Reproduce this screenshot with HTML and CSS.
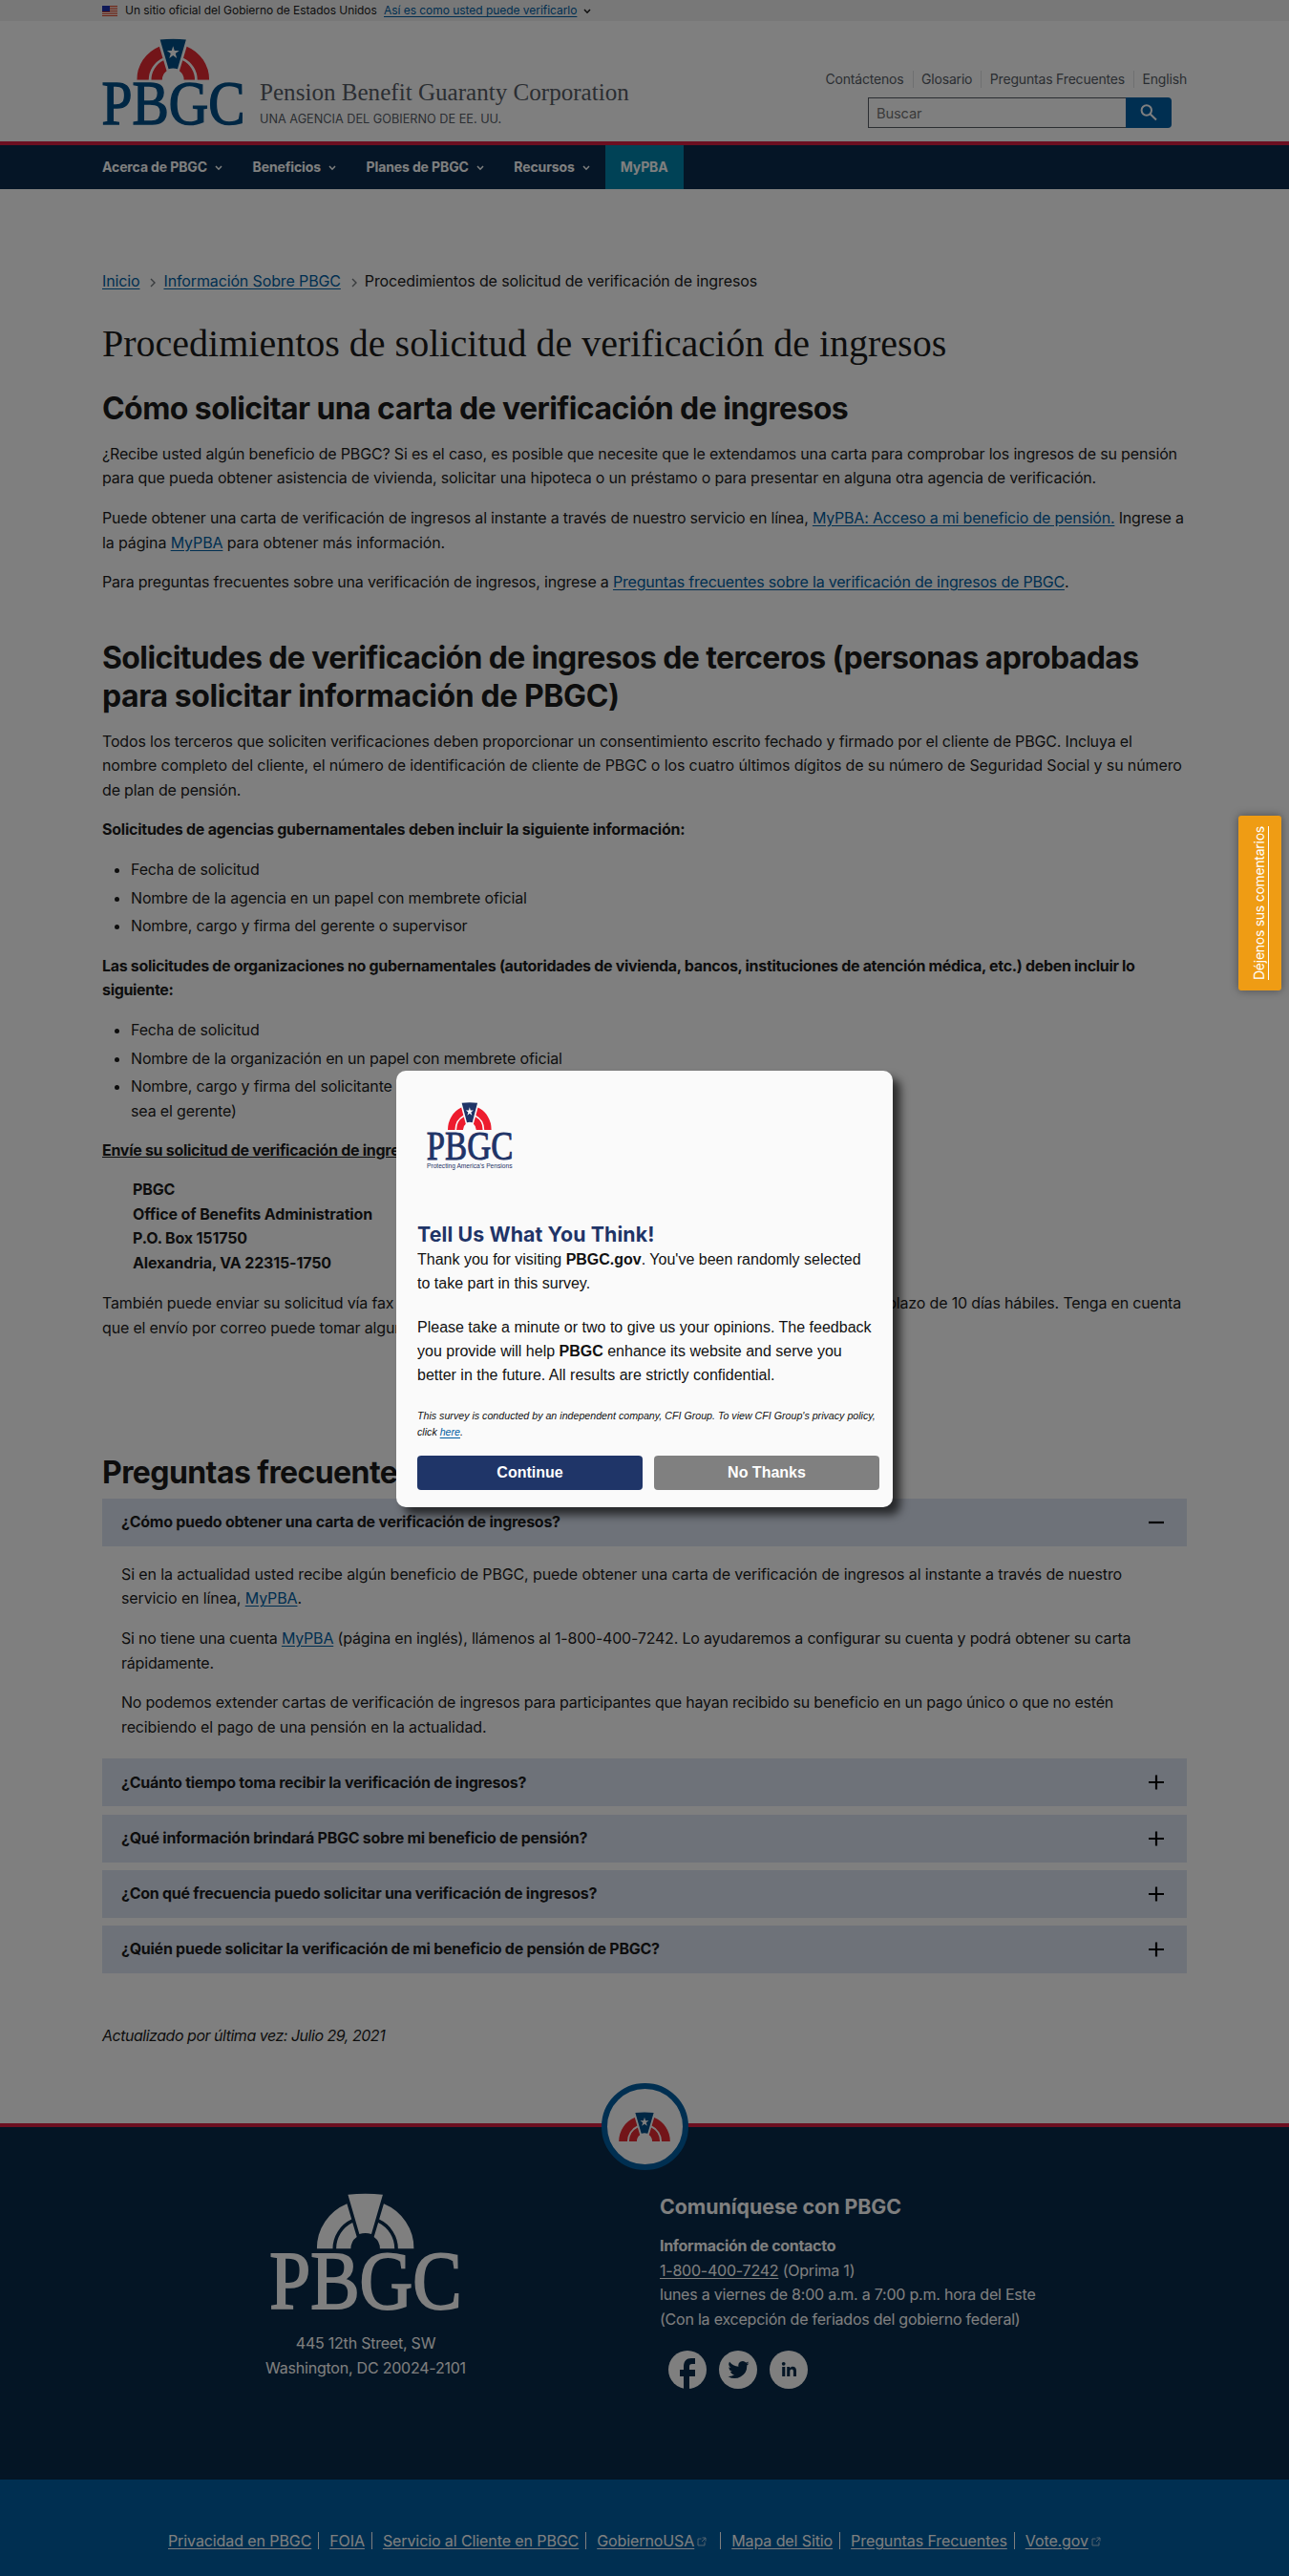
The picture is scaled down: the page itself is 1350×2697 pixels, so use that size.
FILE: index.html
```html
<!DOCTYPE html>
<html lang="es">
<head>
<meta charset="utf-8">
<title>Procedimientos de solicitud de verificación de ingresos</title>
<link rel="stylesheet" href="styles.css">
</head>
<body>
<svg class="defs" aria-hidden="true">
  <symbol id="arch" viewBox="-154 -176 308 176">
    <g class="ring">
      <path d="M-153 0A153 153 0 0 1-58-142L-43.500-93A103 103 0 0 0-103 0Z"/>
      <path d="M-92 0A92 92 0 0 1-40.500-83L-27-38A46 46 0 0 0-46 0Z"/>
      <path d="M153 0A153 153 0 0 0 58-142L43.500-93A103 103 0 0 1 103 0Z"/>
      <path d="M92 0A92 92 0 0 0 40.500-83L27-38A46 46 0 0 1 46 0Z"/>
    </g>
    <path class="key" d="M-55-171Q0-177 55-171L19-47Q0-53-19-47Z"/>
    <path class="star" d="M0-144L6-124H26L10-112L16-92L0-104L-16-92L-10-112L-26-124H-6Z"/>
  </symbol>
  <symbol id="chev" viewBox="0 0 8 6"><path d="M1 1L4 4.200L7 1" fill="none" stroke="currentColor" stroke-width="1.500"/></symbol>
  <symbol id="ext" viewBox="0 0 10 10"><path d="M4.500 2H1V9H8V5.500M5.500 1H9V4.500M9 1L5 5" fill="none" stroke="currentColor" stroke-width="1"/></symbol>
</svg>

<div class="banner"><div class="wrap banner-row">
  <svg class="flag" viewBox="0 0 16 11"><path fill="#fff" d="M0 0H16V11H0Z"/><path fill="#db3e1f" d="M0 0H16V1H0ZM0 2H16V3H0ZM0 4H16V5H0ZM0 6H16V7H0ZM0 8H16V9H0ZM0 10H16V11H0Z"/><path fill="#1e33b1" d="M0 0H8V6H0Z"/></svg>
  <span class="banner-text">Un sitio oficial del Gobierno de Estados Unidos</span>
  <a href="#" class="banner-link">Así es como usted puede verificarlo</a>
  <svg class="chev"><use href="#chev"/></svg>
</div></div>

<header class="header"><div class="wrap header-row">
  <svg class="logo logo-header" viewBox="-300 -176 602 370"><use href="#arch" x="-154" y="-176" width="308" height="176"/><text class="letters" x="-302" y="188" textLength="606" lengthAdjust="spacingAndGlyphs">PBGC</text></svg>
  <div class="brand">
    <div class="brand-name">Pension Benefit Guaranty Corporation</div>
    <div class="brand-sub">UNA AGENCIA DEL GOBIERNO DE EE. UU.</div>
  </div>
  <div class="header-tools">
    <ul class="top-links"><li>Contáctenos</li><li>Glosario</li><li>Preguntas Frecuentes</li><li>English</li></ul>
    <div class="search">
      <div class="search-input">Buscar</div>
      <div class="search-button"><svg viewBox="0 0 20 20" width="20" height="20"><circle cx="7.800" cy="7.500" r="5.200"/><path d="M11.800 11.500L18 17.500"/></svg></div>
    </div>
  </div>
</div></header>

<nav class="nav"><div class="wrap nav-row">
  <span class="nav-item">Acerca de PBGC<svg class="chev"><use href="#chev"/></svg></span>
  <span class="nav-item">Beneficios<svg class="chev"><use href="#chev"/></svg></span>
  <span class="nav-item">Planes de PBGC<svg class="chev"><use href="#chev"/></svg></span>
  <span class="nav-item">Recursos<svg class="chev"><use href="#chev"/></svg></span>
  <span class="nav-item nav-active">MyPBA</span>
</div></nav>

<main class="wrap main">
  <div class="crumbs"><a href="#">Inicio</a><svg class="crumb-sep" viewBox="0 0 6 10"><path d="M1 1L5 5L1 9"/></svg><a href="#">Información Sobre PBGC</a><svg class="crumb-sep" viewBox="0 0 6 10"><path d="M1 1L5 5L1 9"/></svg><span>Procedimientos de solicitud de verificación de ingresos</span></div>
  <h1>Procedimientos de solicitud de verificación de ingresos</h1>
  <h2 class="first">Cómo solicitar una carta de verificación de ingresos</h2>
  <p>¿Recibe usted algún beneficio de PBGC? Si es el caso, es posible que necesite que le extendamos una carta para comprobar los ingresos de su pensión<br>para que pueda obtener asistencia de vivienda, solicitar una hipoteca o un préstamo o para presentar en alguna otra agencia de verificación.</p>
  <p class="tight">Puede obtener una carta de verificación de ingresos al instante a través de nuestro servicio en línea, <a href="#">MyPBA: Acceso a mi beneficio de pensión.</a> Ingrese a<br><span class="loose">la página <a href="#">MyPBA</a> para obtener más información.</span></p>
  <p class="tight">Para preguntas frecuentes sobre una verificación de ingresos, ingrese a <a href="#">Preguntas frecuentes sobre la verificación de ingresos de PBGC</a>.</p>
  <h2 class="second">Solicitudes de verificación de ingresos de terceros (personas aprobadas<br><span class="wider">para solicitar información de PBGC)</span></h2>
  <p class="snug">Todos los terceros que soliciten verificaciones deben proporcionar un consentimiento escrito fechado y firmado por el cliente de PBGC. Incluya el<br><span class="loose">nombre completo del cliente, el número de identificación de cliente de PBGC o los cuatro últimos dígitos de su número de Seguridad Social y su número</span><br>de plan de pensión.</p>
  <p><b class="request">Solicitudes de agencias gubernamentales deben incluir la siguiente información:</b></p>
  <ul class="list">
    <li>Fecha de solicitud</li>
    <li>Nombre de la agencia en un papel con membrete oficial</li>
    <li>Nombre, cargo y firma del gerente o supervisor</li>
  </ul>
  <p><b class="org">Las solicitudes de organizaciones no gubernamentales (autoridades de vivienda, bancos, instituciones de atención médica, etc.) deben incluir lo<br>siguiente:</b></p>
  <ul class="list">
    <li>Fecha de solicitud</li>
    <li>Nombre de la organización en un papel con membrete oficial</li>
    <li>Nombre, cargo y firma del solicitante<br>sea el gerente)</li>
  </ul>
  <p><b><u>Envíe su solicitud de verificación de ingresos a:</u></b></p>
  <p class="address"><b>PBGC<br>Office of Benefits Administration<br>P.O. Box 151750<br>Alexandria, VA 22315-1750</b></p>
  <p class="fax"><span>También puede enviar su solicitud vía fax</span><span>plazo de 10 días hábiles. Tenga en cuenta</span></p>
  <p class="fax-end">que el envío por correo puede tomar algunos días.</p>
  <h2 class="faq">Preguntas frecuentes</h2>
  <div class="accordion">
    <div class="acc-head">¿Cómo puedo obtener una carta de verificación de ingresos?<svg class="sign" viewBox="0 0 16 16"><path d="M0 8H16"/></svg></div>
    <div class="acc-body">
      <p class="loose">Si en la actualidad usted recibe algún beneficio de PBGC, puede obtener una carta de verificación de ingresos al instante a través de nuestro<br>servicio en línea, <a href="#">MyPBA</a>.</p>
      <p class="tight">Si no tiene una cuenta <a href="#">MyPBA</a> (página en inglés), llámenos al 1-800-400-7242. Lo ayudaremos a configurar su cuenta y podrá obtener su carta<br>rápidamente.</p>
      <p class="tighter">No podemos extender cartas de verificación de ingresos para participantes que hayan recibido su beneficio en un pago único o que no estén<br><span class="loose">recibiendo el pago de una pensión en la actualidad.</span></p>
    </div>
    <div class="acc-head">¿Cuánto tiempo toma recibir la verificación de ingresos?<svg class="sign" viewBox="0 0 16 16"><path d="M0 8H16M8 0.500V15.500"/></svg></div>
    <div class="acc-head">¿Qué información brindará PBGC sobre mi beneficio de pensión?<svg class="sign" viewBox="0 0 16 16"><path d="M0 8H16M8 0.500V15.500"/></svg></div>
    <div class="acc-head">¿Con qué frecuencia puedo solicitar una verificación de ingresos?<svg class="sign" viewBox="0 0 16 16"><path d="M0 8H16M8 0.500V15.500"/></svg></div>
    <div class="acc-head">¿Quién puede solicitar la verificación de mi beneficio de pensión de PBGC?<svg class="sign" viewBox="0 0 16 16"><path d="M0 8H16M8 0.500V15.500"/></svg></div>
  </div>
  <p class="updated">Actualizado por última vez: Julio 29, 2021</p>
</main>

<footer class="footer">
  <div class="to-top"><svg class="logo logo-badge"><use href="#arch"/></svg></div>
  <div class="foot-row">
    <div class="foot-left">
      <svg class="logo logo-footer" viewBox="-300 -176 602 370"><use href="#arch" x="-154" y="-176" width="308" height="176"/><text class="letters" x="-302" y="188" textLength="606" lengthAdjust="spacingAndGlyphs">PBGC</text></svg>
      <p>445 12th Street, SW<br>Washington, DC 20024-2101</p>
    </div>
    <div class="foot-right">
      <h3>Comuníquese con PBGC</h3>
      <p><b>Información de contacto</b><br><a href="#">1-800-400-7242</a> (Oprima 1)<br>lunes a viernes de 8:00 a.m. a 7:00 p.m. hora del Este<br>(Con la excepción de feriados del gobierno federal)</p>
      <div class="social">
        <svg viewBox="0 0 40 40"><circle cx="20" cy="20" r="20"/><path class="cut" d="M16 41V27H12V20H16V17C16 11 19 8 24 8H28V14H25C22.500 14 22 15 22 17V20H28V27H22V41Z"/></svg>
        <svg viewBox="0 0 40 40"><circle cx="20" cy="20" r="20"/><path class="cut" transform="translate(9.500 9) scale(.92)" d="M24 4.600a10 10 0 0 1-2.800.8 5 5 0 0 0 2.200-2.700 10 10 0 0 1-3.100 1.200 4.900 4.900 0 0 0-8.400 4.500A14 14 0 0 1 1.700 3.100a4.900 4.900 0 0 0 1.500 6.600 5 5 0 0 1-2.200-.6 4.900 4.900 0 0 0 3.900 4.900 5 5 0 0 1-2.200.1 4.900 4.900 0 0 0 4.600 3.400A9.900 9.900 0 0 1 0 19.500 14 14 0 0 0 21.500 7.100 10 10 0 0 0 24 4.600Z"/></svg>
        <svg viewBox="0 0 40 40"><circle cx="20" cy="20" r="20"/><path class="cut" d="M13.200 17H16.300V27H13.200ZM18.200 17H21.200V18.400C22.800 16 28 16 28 21V27H24.900V21.800C24.900 18.600 21.300 18.900 21.300 21.800V27H18.200Z"/><circle class="cut" cx="14.700" cy="13.800" r="1.900"/></svg>
      </div>
    </div>
  </div>
</footer>
<div class="bottom">
  <span><a href="#">Privacidad en PBGC</a></span>
  <span><a href="#">FOIA</a></span>
  <span><a href="#">Servicio al Cliente en PBGC</a></span>
  <span class="wide"><a href="#">GobiernoUSA</a><svg class="ext"><use href="#ext"/></svg></span>
  <span><a href="#">Mapa del Sitio</a></span>
  <span><a href="#">Preguntas Frecuentes</a></span>
  <span><a href="#">Vote.gov</a><svg class="ext"><use href="#ext"/></svg></span>
</div>

<div class="overlay"></div>
<a href="#" class="feedback"><span>Déjenos sus comentarios</span></a>
<div class="modal">
  <svg class="logo logo-modal" viewBox="-300 -176 602 370" preserveAspectRatio="none"><use href="#arch" x="-154" y="-176" width="308" height="176"/><text class="letters" x="-302" y="188" textLength="606" lengthAdjust="spacingAndGlyphs">PBGC</text></svg>
  <div class="tagline">Protecting America's Pensions</div>
  <h3>Tell Us What You Think!</h3>
  <p>Thank you for visiting <b>PBGC.gov</b>. You've been randomly selected<br>to take part in this survey.</p>
  <p class="gap">Please take a minute or two to give us your opinions. The feedback<br>you provide will help <b>PBGC</b> enhance its website and serve you<br>better in the future. All results are strictly confidential.</p>
  <p class="fine">This survey is conducted by an independent company, CFI Group. To view CFI Group's privacy policy,<br>click <a href="#">here</a>.</p>
  <div class="buttons"><span class="btn yes">Continue</span><span class="btn no">No Thanks</span></div>
</div>
</body>
</html>
```
FILE: styles.css
```css
* { box-sizing: border-box; }
body {
  position: relative;
  margin: 0;
  min-height: 2697px;
  background: #fff;
  color: #1b1b1b;
  font: 16px/25.6px Inter, "Liberation Sans", sans-serif;
  letter-spacing: -0.0105em;
  white-space: nowrap;
}
h1, h2, h3, p, ul { margin: 0; padding: 0; }
ul { list-style: none; }
b, h2, h3 { font-weight: 700; letter-spacing: -0.0182em; }
a { color: #005ea2; text-underline-offset: 2px; }
.defs { position: absolute; width: 0; height: 0; }
.wrap { width: 1136px; margin: 0 auto; }
.loose { letter-spacing: -0.0078em; }
.tight { letter-spacing: -0.0125em; }
.tighter { letter-spacing: -0.0138em; }
.wider { letter-spacing: -0.0125em; }
.request { letter-spacing: -0.0150em; }
.org { letter-spacing: -0.0200em; }

/* Logo */
.logo { --ring: #e62a32; --key: #004f88; --star: #fff; --letters: #004f88; display: block; overflow: visible; }
.ring { fill: var(--ring); }
.key { fill: var(--key); }
.star { fill: var(--star); }
.letters { fill: var(--letters); stroke: var(--letters); stroke-width: 6px; font: 262px "Liberation Serif", serif; letter-spacing: 0; }
.logo-header { width: 149px; height: 92px; margin: 18px 0 0; }
.logo-footer { --ring: #fff; --key: #fff; --letters: #fff; width: 200px; height: 123px; }
.logo-badge { width: 54px; height: 31px; }
.logo-modal { --ring: #ed1c2e; --key: #1f3467; --letters: #1f3467; width: 90px; height: 61px; margin-left: 10px; }

/* Banner and header */
.banner { height: 22px; background: #f0f0f0; }
.banner-row { display: flex; align-items: center; height: 22px; font-size: 12px; letter-spacing: -0.0035em; }
.flag { width: 16px; height: 11px; margin-right: 8px; }
.banner-text { width: 271px; }
.chev { width: 8px; height: 6px; margin: 1px 0 0 8px; }
.banner-row .chev { margin-left: 7px; }
.header { height: 126px; }
.header-row { display: flex; align-items: flex-start; }
.brand { margin: 59px 0 0 16px; color: #565c65; }
.brand-name { font: 25.1px/32px "Liberation Serif", serif; letter-spacing: 0; }
.brand-sub { font-size: 12.7px; line-height: 20px; letter-spacing: 0; margin-top: 2px; }
.header-tools { margin-left: auto; padding-top: 52px; }
.top-links { display: flex; font-size: 14px; line-height: 18px; color: #565c65; letter-spacing: -0.013em; justify-content: flex-end; }
.top-links li + li { margin-left: 9px; padding-left: 8.500px; border-left: 1px solid #dfe1e2; }
.search { display: flex; width: 318px; height: 32px; margin: 10px 16px 0 auto; }
.search-input { flex: 1; border: 1px solid #565c65; border-right: 0; padding-left: 8px; line-height: 32px; font-size: 14.700px; color: #757575; }
.search-button { width: 48px; display: flex; align-items: center; justify-content: center; background: #005ea2; border-radius: 0 4px 4px 0; }
.search-button svg { fill: none; stroke: #fff; stroke-width: 2; }

/* Navigation */
.nav { height: 50px; border-top: 4px solid #d81f42; background: #0a2b4c; }
.nav-row { display: flex; height: 46px; color: #fff; font-size: 14px; font-weight: 700; line-height: 46px; letter-spacing: -0.008em; }
.nav-item { display: flex; align-items: center; margin-right: 31.500px; }
.nav-active { margin-left: -15.500px; padding: 0 16px; background: #0085ad; }

/* Page content */
.main { padding-top: 84px; height: 2025px; }
.crumbs { display: flex; align-items: center; letter-spacing: -0.008em; }
.crumb-sep { width: 6px; height: 10px; margin: 2px 8px 0 11px; fill: none; stroke: #71767a; stroke-width: 1.400; }
h1 { margin-top: 28.600px; font: 40px/48px "Liberation Serif", serif; letter-spacing: 0; }
h2 { font-size: 32px; line-height: 39.600px; }
.first { margin: 23.500px 0 -0.500px; }
.second { margin-top: 46.400px; letter-spacing: -0.0195em; }
.main p { margin-top: 16px; }
.main .snug { margin-top: 15.300px; }
.list { margin-top: 16px; padding-left: 30px; list-style: disc; }
.list li { letter-spacing: -0.009em; }
.list li + li { margin-top: 4px; }
.main .address { margin: 15px 0 0 32px; }
.address b { letter-spacing: -0.009em; }
.main .fax { display: flex; justify-content: space-between; width: 1130px; margin-top: 16.700px; }
.main .fax-end { margin-top: 0; }
.faq { margin-top: 118.500px; }

/* Accordion */
.accordion { margin-top: 8px; }
.acc-head { display: flex; align-items: center; justify-content: space-between; height: 50px; padding: 0 24px 0 20px; background: #dce4f3; font-weight: 700; letter-spacing: -0.0165em; }
.acc-head + .acc-head { margin-top: 8.300px; }
.sign { width: 16px; height: 16px; fill: none; stroke: #000; stroke-width: 2.200; }
.acc-body { padding: 0.500px 20px 20px; }
.updated { padding-top: 37px; font-style: italic; letter-spacing: -0.0300em; }

/* Footer */
.footer { height: 373px; border-top: 4px solid #d81f42; background: #082a4a; color: #fff; letter-spacing: -0.014em; }
.to-top { display: flex; align-items: center; justify-content: center; width: 91px; height: 91px; margin: -46px auto 0; border: 6px solid #005ea2; border-radius: 50%; background: #fff; }
.footer a, .bottom a { color: inherit; }
.foot-row { display: flex; margin-top: 24px; }
.foot-left { width: 200px; margin-left: 283px; text-align: center; }
.foot-left p { display: flex; justify-content: center; margin-top: 22px; }
.foot-right { margin: 1px 0 0 208px; }
.foot-right h3 { font-size: 21.300px; line-height: 26px; letter-spacing: 0; }
.foot-right p { margin-top: 16px; }
.social { display: flex; gap: 13px; margin: 20px 0 0 9px; }
.social svg { width: 40px; height: 40px; fill: #fff; }
.social .cut { fill: #082a4a; }
.bottom { display: flex; align-items: flex-start; height: 101px; padding: 55px 0 0 176px; background: #005ea2; color: #fff; line-height: 18px; letter-spacing: -0.006em; }
.bottom span { padding-right: 7px; margin-right: 11px; border-right: 1px solid #fff; }
.bottom span:last-child { border: 0; }
.bottom .wide { padding-right: 14px; }
.ext { width: 10px; height: 10px; margin-left: 3px; color: #a9c6e0; }

/* Layers over the page */
.overlay { position: absolute; inset: 0; background: rgba(0, 0, 0, .5); }
.feedback { position: absolute; left: 1297px; top: 854px; display: flex; align-items: center; justify-content: center; width: 45px; height: 183px; border-radius: 3px; background: #ef9c14; color: #fff; box-shadow: 0 0 10px rgba(0, 0, 0, .4); font-size: 13.900px; letter-spacing: -0.015em; }
.feedback span { writing-mode: vertical-rl; transform: rotate(180deg); }
.modal { position: absolute; left: 415px; top: 1121px; width: 520px; height: 457px; padding: 33px 14px 0 22px; border-radius: 10px; background: #fafafa; color: #111; box-shadow: 8px 8px 10px rgba(0, 0, 0, .65); font-family: "Liberation Sans", Arial, sans-serif; letter-spacing: 0; }
.modal b { letter-spacing: 0; }
.tagline { margin: 1px 0 0 10px; color: #1f3467; font-size: 6.650px; line-height: 9px; }
.modal h3 { margin-top: 54px; color: #1f3467; font: 700 21.300px/26px Inter, sans-serif; letter-spacing: 0.006em; }
.modal p { margin-top: 1px; line-height: 25.300px; }
.modal .gap { margin-top: 20px; }
.modal .fine { margin-top: 22px; font-size: 10.660px; line-height: 17px; font-style: italic; }
.buttons { display: flex; gap: 12px; margin-top: 16px; }
.btn { width: 236px; height: 36px; border-radius: 4px; color: #fff; font-weight: 700; line-height: 36px; text-align: center; }
.yes { background: #1f3568; }
.no { background: #808080; }
```
